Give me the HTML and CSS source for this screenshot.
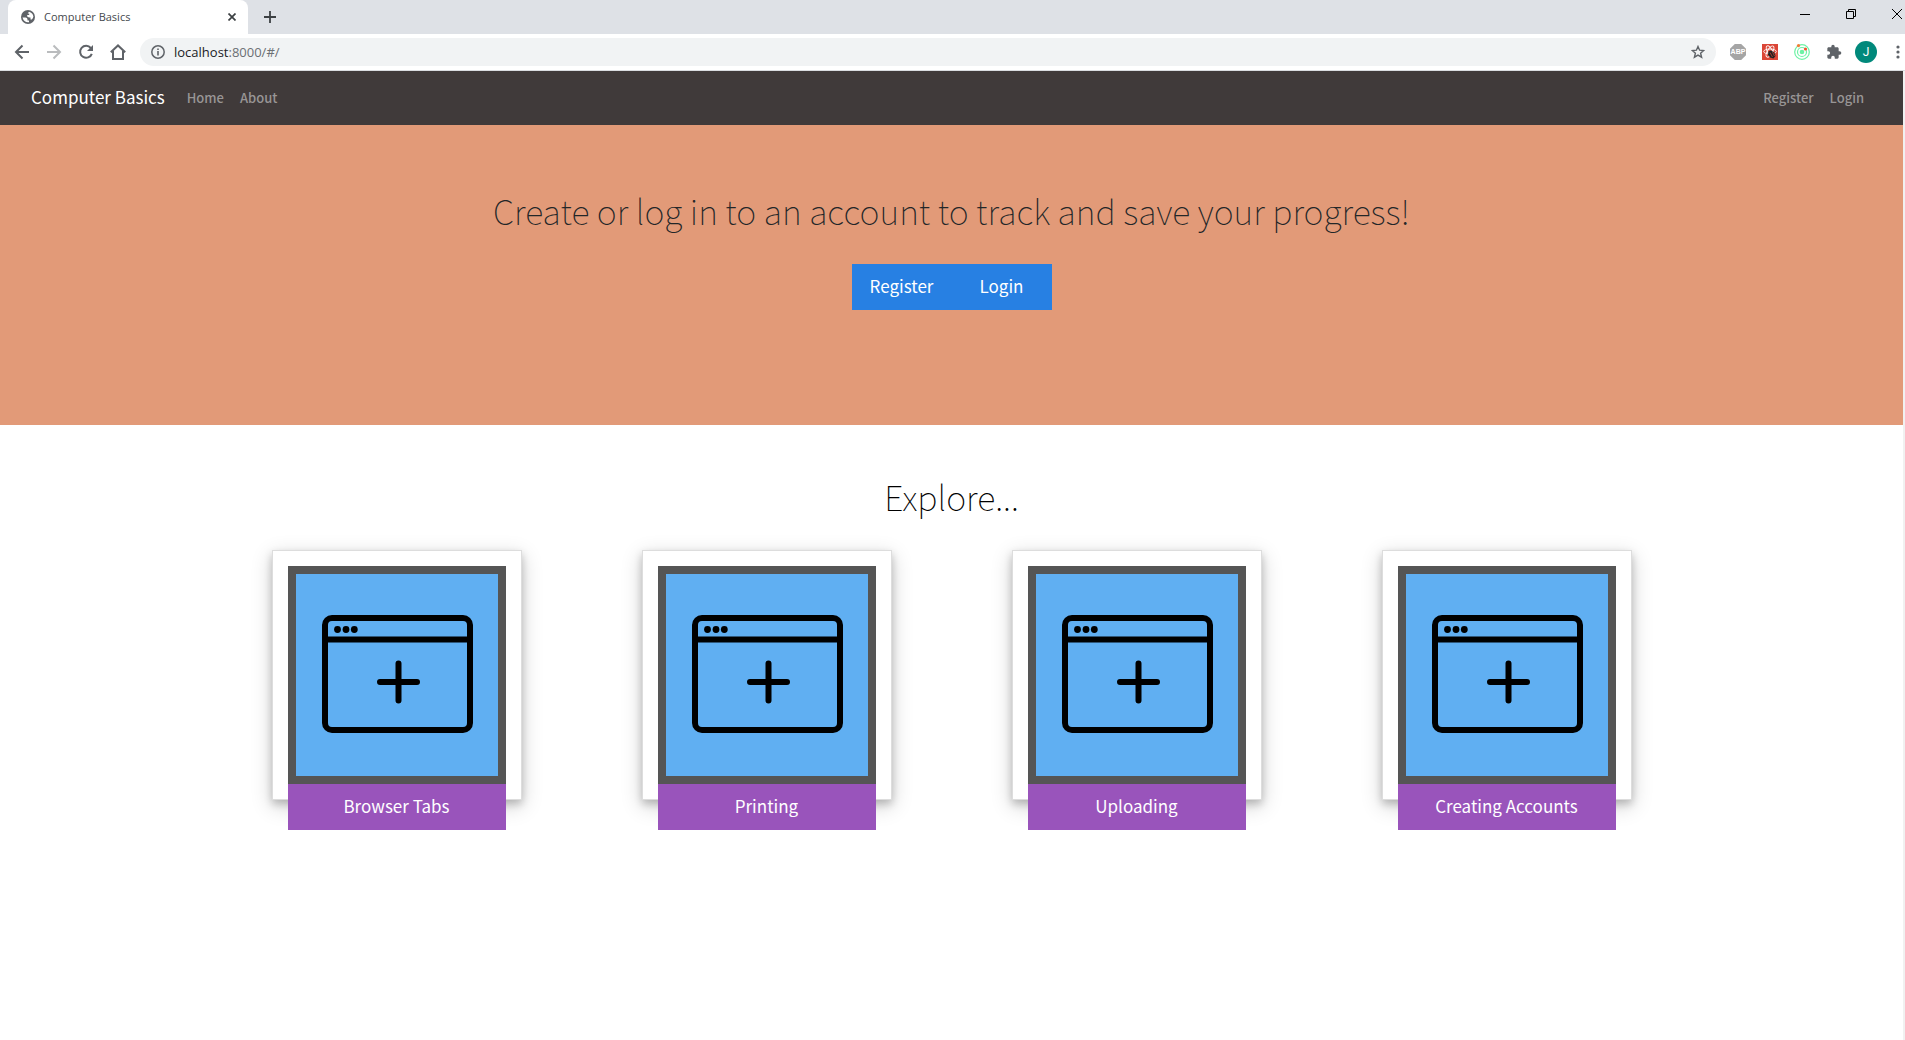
FILE: index.html
```html
<!DOCTYPE html>
<html lang="en">
<head>
<meta charset="utf-8">
<title>Computer Basics</title>
<link rel="stylesheet" href="styles.css">
</head>
<body>
<svg class="symbols" aria-hidden="true">
  <symbol id="new-window" viewBox="0 0 202 202">
    <rect x="29" y="44" width="145" height="112" rx="7" fill="none" stroke="#000" stroke-width="6"/>
    <path d="M29 65.500H174" stroke="#000" stroke-width="6"/>
    <circle cx="41.500" cy="55.500" r="3.400"/><circle cx="50" cy="55.500" r="3.400"/><circle cx="58.300" cy="55.500" r="3.400"/>
    <path d="M84 108H121M102.500 89.500V126.500" stroke="#000" stroke-width="6" stroke-linecap="round"/>
  </symbol>
</svg>

<div class="browser">
  <div class="tab-strip">
    <div class="tab">
      <svg class="globe" viewBox="0 0 14 14"><circle cx="7" cy="7" r="7" fill="#5f6368"/><path d="M1.500 7.500H4.500Q6.500 7.500 6.500 9.500V10.500H8V12.200Q3 12.800 1.500 7.500ZM8 1.700Q11.800 2.800 12.400 6.500Q12 8.300 10.800 9.500H9.500V7.500Q7.500 7.800 6.200 6.600V5H8.200V3.500H6.700Z" fill="#fff"/></svg>
      <span class="tab-title">Computer Basics</span>
      <button class="icon-button tab-close" aria-label="Close tab"><svg width="8" height="8" viewBox="0 0 8 8"><path d="M.5 .5L7.500 7.500M7.500 .5L.5 7.500" stroke="#3c4043" stroke-width="1.700"/></svg></button>
    </div>
    <button class="icon-button new-tab" aria-label="New tab"><svg width="12" height="12" viewBox="0 0 12 12"><path d="M6 0V12M0 6H12" stroke="#3c4043" stroke-width="1.800"/></svg></button>
    <div class="window-controls">
      <button class="icon-button" aria-label="Minimize"><svg width="10" height="10"><path d="M0 5.500H10" stroke="#000"/></svg></button>
      <button class="icon-button" aria-label="Restore"><svg width="10" height="10"><path d="M.5 2.500H7.500V9.500H.5ZM2.500 2.500V.5H9.500V7.500H7.500" fill="none" stroke="#000"/></svg></button>
      <button class="icon-button" aria-label="Close"><svg width="10" height="10"><path d="M0 0L10 10M10 0L0 10" stroke="#000"/></svg></button>
    </div>
  </div>
  <div class="toolbar">
    <div class="nav-buttons">
      <button class="icon-button" aria-label="Back"><svg width="16" height="16" viewBox="0 0 16 16"><path d="M15 8H2M8.500 1.500L2 8L8.500 14.500" fill="none" stroke="#5f6368" stroke-width="2"/></svg></button>
      <button class="icon-button" aria-label="Forward"><svg width="16" height="16" viewBox="0 0 16 16"><path d="M1 8H14M7.500 1.500L14 8L7.500 14.500" fill="none" stroke="#babcbe" stroke-width="2"/></svg></button>
      <button class="icon-button" aria-label="Reload"><svg width="16" height="16" viewBox="0 0 16 16"><path d="M12.800 4A6 6 0 1 0 13.800 9.800" fill="none" stroke="#5f6368" stroke-width="2"/><path d="M15 1V7H9Z" fill="#5f6368"/></svg></button>
      <button class="icon-button" aria-label="Home"><svg width="16" height="16" viewBox="0 0 16 16"><path d="M.8 8.300L8 1.500L15.200 8.300M3 7V15H13V7" fill="none" stroke="#5f6368" stroke-width="2"/></svg></button>
    </div>
    <div class="omnibox">
      <svg width="14" height="14" viewBox="0 0 14 14"><circle cx="7" cy="7" r="6.200" fill="none" stroke="#5f6368" stroke-width="1.500"/><path d="M7 6V10.500M7 3.500V5" stroke="#5f6368" stroke-width="1.600"/></svg>
      <span class="address">localhost<span class="path">:8000/#/</span></span>
      <button class="icon-button" aria-label="Bookmark this page"><svg width="14" height="14" viewBox="0 0 14 14"><path d="M7 1.500L8.600 5.200L12.700 5.500L9.600 8.200L10.600 12.200L7 10.100L3.400 12.200L4.400 8.200L1.300 5.500L5.400 5.200Z" fill="none" stroke="#5f6368" stroke-width="1.400"/></svg></button>
    </div>
    <div class="extensions">
      <button class="icon-button abp" aria-label="Adblock Plus">ABP</button>
      <button class="icon-button" aria-label="Privacy extension"><svg width="16" height="16" viewBox="0 0 16 16"><rect width="16" height="16" fill="#db4637"/><g fill="none" stroke="#fff" stroke-width=".9"><ellipse cx="8" cy="7.500" rx="6.300" ry="2.500"/><ellipse cx="8" cy="7.500" rx="6.300" ry="2.500" transform="rotate(60 8 7.500)"/><ellipse cx="8" cy="7.500" rx="6.300" ry="2.500" transform="rotate(120 8 7.500)"/></g><path d="M6.500 7.500L9 6.500L12.500 8.500L13.500 12L11.500 14.500L8 13.500L6 10.500Z" fill="#222"/><path d="M8 8.500L10.500 13M10.500 8L12.500 12" stroke="#db4637" stroke-width=".7"/></svg></button>
      <button class="icon-button" aria-label="Orbit extension"><svg width="16" height="16" viewBox="0 0 16 16"><g fill="none" stroke="#6df2a5" stroke-width="1.200"><circle cx="8" cy="8" r="7.300"/><circle cx="8" cy="8" r="4.500"/></g><circle cx="8" cy="8" r="2.300" fill="#6df2a5"/><circle cx="4.500" cy="1.600" r="1.600" fill="#f47b35"/><circle cx="11.500" cy="5" r="1.600" fill="#f4512c"/></svg></button>
      <button class="icon-button" aria-label="Extensions"><svg width="16" height="16" viewBox="0 0 24 24"><path d="M20.500 11H19V7c0-1.100-.9-2-2-2h-4V3.500a2.500 2.500 0 0 0-5 0V5H4c-1.100 0-2 .9-2 2v3.800h1.500a2.700 2.700 0 0 1 0 5.400H2V20c0 1.100.9 2 2 2h3.800v-1.500a2.700 2.700 0 0 1 5.400 0V22H17c1.100 0 2-.9 2-2v-4h1.500a2.500 2.500 0 0 0 0-5z" fill="#5f6368"/></svg></button>
      <button class="icon-button avatar" aria-label="Profile">J</button>
      <button class="icon-button" aria-label="Menu"><svg width="4" height="14" viewBox="0 0 4 14" fill="#5f6368"><circle cx="2" cy="2" r="1.600"/><circle cx="2" cy="7" r="1.600"/><circle cx="2" cy="12" r="1.600"/></svg></button>
    </div>
  </div>
</div>

<div class="page">
  <nav class="navbar">
    <a class="brand" href="#/">Computer Basics</a>
    <div class="links links-main"><a href="#/">Home</a><a href="#/about">About</a></div>
    <div class="links"><a href="#/register">Register</a><a href="#/login">Login</a></div>
  </nav>
  <header class="hero">
    <h1>Create or log in to an account to track and save your progress!</h1>
    <div class="hero-actions"><button>Register</button><button>Login</button></div>
  </header>
  <main class="explore">
    <h2>Explore...</h2>
    <div class="cards">
      <a class="card" href="#/tabs"><svg class="picture"><use href="#new-window"/></svg><span class="label">Browser Tabs</span></a>
      <a class="card" href="#/printing"><svg class="picture"><use href="#new-window"/></svg><span class="label">Printing</span></a>
      <a class="card" href="#/uploading"><svg class="picture"><use href="#new-window"/></svg><span class="label">Uploading</span></a>
      <a class="card" href="#/accounts"><svg class="picture"><use href="#new-window"/></svg><span class="label">Creating Accounts</span></a>
    </div>
  </main>
</div>
</body>
</html>
```
FILE: styles.css
```css
* { box-sizing: border-box; }

body {
  margin: 0;
  min-height: 100vh;
  display: flex;
  flex-direction: column;
  background: #fff;
  font-family: "Noto Sans CJK SC", "Noto Sans CJK JP", sans-serif;
}

a { text-decoration: none; }
h1, h2 { margin: 0; }
svg { display: block; }
.symbols { display: none; }

/* Browser window */
.browser {
  border-bottom: 1px solid #dadce0;
  font-family: "Open Sans", "Noto Sans", sans-serif;
}

.icon-button {
  display: flex;
  align-items: center;
  justify-content: center;
  flex: none;
  padding: 0;
  border: 0;
  background: none;
  font-family: inherit;
}

.tab-strip {
  display: flex;
  align-items: center;
  height: 34px;
  padding-left: 8px;
  background: #dee1e6;
}

.tab {
  display: flex;
  align-items: center;
  width: 240px;
  height: 34px;
  padding: 0 12px;
  border-radius: 8px 8px 0 0;
  background: #fff;
}

.globe { width: 16px; height: 14px; margin-right: 8px; }
.tab-title { flex: 1; font-size: 11px; line-height: 16px; color: #45494d; }
.new-tab { margin-left: 16px; }

.window-controls {
  display: flex;
  gap: 36px;
  margin-left: auto;
  align-self: flex-start;
  padding: 9px 3px 0 0;
}

.toolbar {
  display: flex;
  align-items: center;
  height: 36px;
  padding: 0 5px 0 14px;
}

.nav-buttons { display: flex; gap: 16px; margin-right: 14px; }

.omnibox {
  display: flex;
  align-items: center;
  gap: 9px;
  flex: 1;
  height: 28px;
  padding: 0 11px;
  border-radius: 14px;
  background: #f1f3f4;
}

.address { flex: 1; font-size: 13px; line-height: 18px; color: #202124; }
.path { color: #6b6f73; }

.extensions {
  display: flex;
  align-items: center;
  gap: 16px;
  margin-left: 14px;
}

.abp {
  width: 16px;
  height: 16px;
  background: #a5a5a5;
  clip-path: polygon(30% 0, 70% 0, 100% 30%, 100% 70%, 70% 100%, 30% 100%, 0 70%, 0 30%);
  color: #fff;
  font: 700 7px/16px "Liberation Sans", sans-serif;
}

.avatar {
  width: 22px;
  height: 22px;
  margin: 0 3px 0 -3px;
  border-radius: 50%;
  background: #00897b;
  color: #fff;
  font: 12px/22px Roboto, sans-serif;
}

/* Site */
.page { flex: 1; border-right: 2px solid #f1f1f1; }

.navbar {
  display: flex;
  align-items: center;
  height: 54px;
  padding: 0 39px 0 31px;
  background: #403a3a;
}

.brand { margin-right: 22px; padding-bottom: 2px; font-size: 17px; line-height: 24px; color: #fff; }
.links { display: flex; gap: 16px; font-size: 13px; line-height: 24px; font-weight: 500; }
.links a { color: #989595; }
.links-main { flex: 1; }

.hero {
  display: flex;
  flex-direction: column;
  align-items: center;
  min-height: 300px;
  padding: 62px 32px;
  background: #e29a78;
  text-align: center;
}

h1, h2 {
  font-size: 34px;
  line-height: 48px;
  font-weight: 100;
  color: #222628;
}

.hero-actions { display: flex; margin-top: 29px; }

.hero-actions button {
  width: 100px;
  height: 46px;
  padding: 0 0 2px;
  border: 0;
  background: #2780e3;
  color: #fff;
  font: 17px/24px "Noto Sans CJK SC", "Noto Sans CJK JP", sans-serif;
}

.explore { padding: 48px 32px; text-align: center; }
.explore h2 { color: #000; }

.cards {
  display: grid;
  grid-template-columns: repeat(4, 1fr);
  justify-items: center;
  max-width: 1480px;
  margin: 29px auto 0;
}

.card {
  width: 250px;
  height: 250px;
  padding: 15px;
  border: 1px solid #ddd;
  box-shadow: 0 4px 8px rgba(0, 0, 0, .2), 0 6px 20px rgba(0, 0, 0, .19);
  color: #fff;
}

.picture {
  width: 218px;
  height: 218px;
  border: 8px solid #555;
  background: #60aff2;
}

.label {
  display: block;
  height: 46px;
  background: #9954bb;
  font-size: 17px;
  line-height: 44px;
}
```
